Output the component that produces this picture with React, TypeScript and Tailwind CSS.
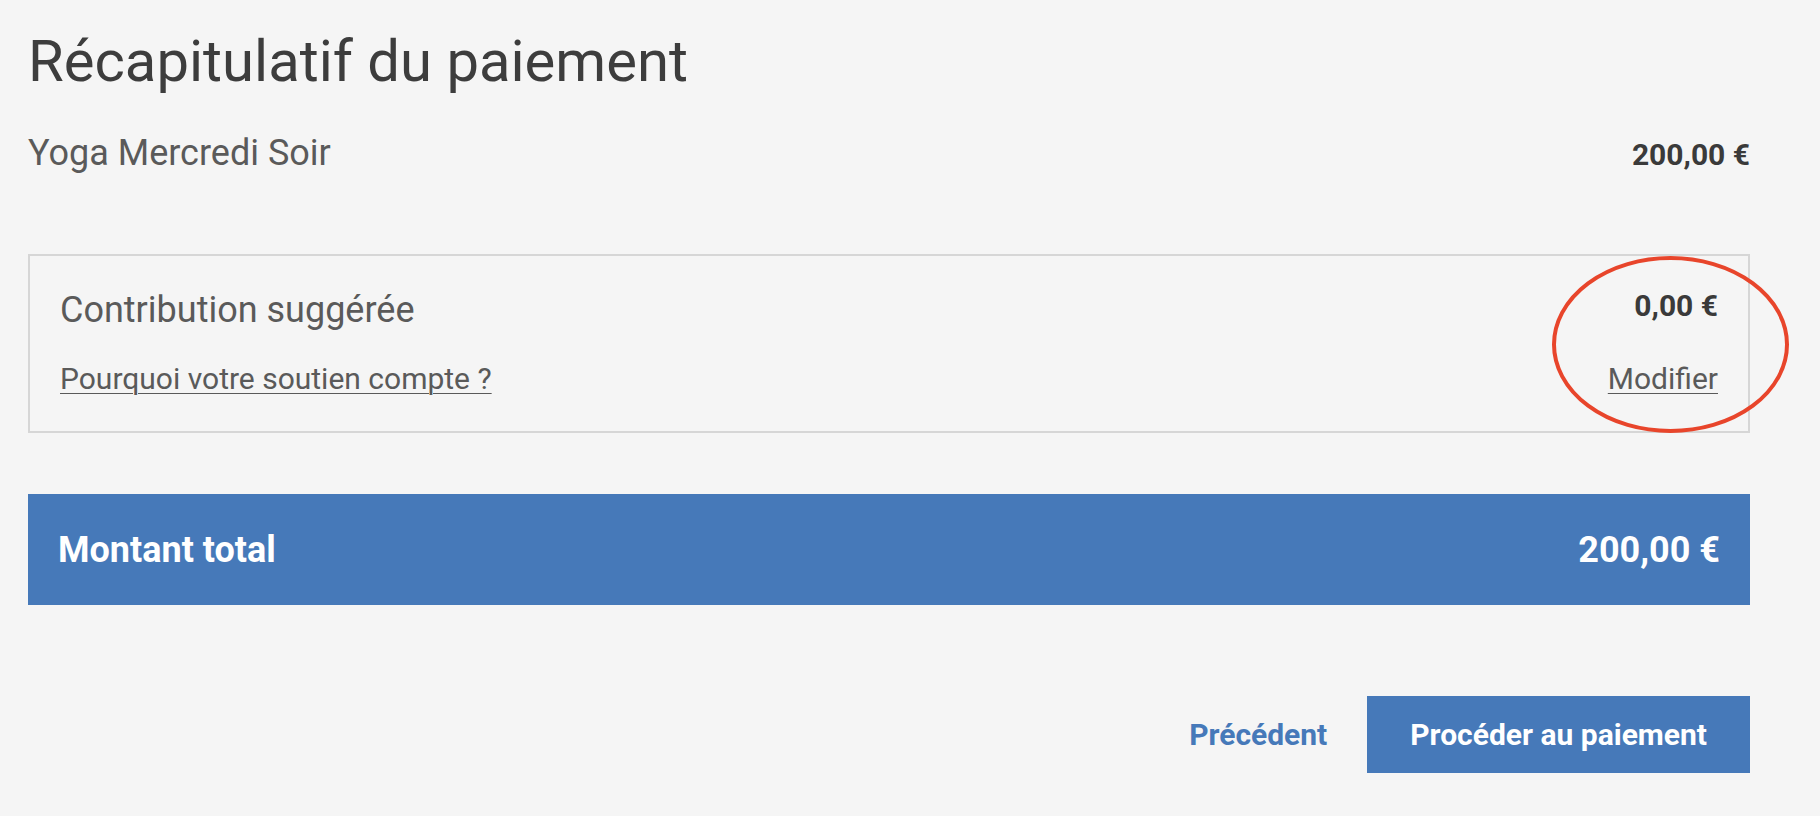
import React from "react";

export default function App() {
  return (
    <div
      className="min-h-[816px] w-full bg-[#f5f5f5] text-[#3d3d3d]"
      style={{ fontFamily: "Roboto, 'Liberation Sans', sans-serif" }}
    >
      <div className="w-[1722px] ml-[28px] pt-[31px] pb-[43px]">
        <h1 className="text-[58px] leading-[60px] font-normal text-[#3d3d3d]">
          Récapitulatif du paiement
        </h1>

        <div className="mt-[44px] flex items-baseline justify-between">
          <span className="text-[36px] leading-[36px] text-[#5a5a5a]">Yoga Mercredi Soir</span>
          <span className="text-[30px] leading-[30px] font-bold text-[#3a3a3a]">200,00 €</span>
        </div>

        <div className="relative mt-[83px] border-2 border-[#d6d6d6] px-[30px] pt-[35px] pb-[37px]">
          <div className="flex items-start justify-between">
            <span className="text-[36px] leading-[38px] text-[#5a5a5a]">Contribution suggérée</span>
            <span className="text-[30px] leading-[30px] font-bold text-[#3a3a3a]">0,00 €</span>
          </div>
          <div className="mt-[35px] flex items-start justify-between">
            <a className="text-[30px] leading-[30px] text-[#5a5a5a] underline decoration-1 underline-offset-[4px] cursor-pointer">
              Pourquoi votre soutien compte ?
            </a>
            <a className="text-[30px] leading-[30px] text-[#5a5a5a] underline decoration-1 underline-offset-[4px] cursor-pointer">
              Modifier
            </a>
          </div>
          <svg
            className="absolute left-[1522px] top-0 pointer-events-none overflow-visible"
            width="237"
            height="177"
            viewBox="0 0 237 177"
          >
            <ellipse cx="118.5" cy="88.5" rx="116.5" ry="86.5" fill="none" stroke="#e8452b" strokeWidth="4" />
          </svg>
        </div>

        <div className="mt-[61px] flex h-[111px] items-center justify-between bg-[#4679b9] px-[30px] text-white">
          <span className="text-[36px] font-bold">Montant total</span>
          <span className="text-[36px] font-bold">200,00 €</span>
        </div>

        <div className="mt-[91px] flex items-center justify-end gap-[40px]">
          <a className="text-[30px] font-bold text-[#4679b9] cursor-pointer">Précédent</a>
          <button className="flex h-[77px] items-center bg-[#4679b9] px-[43px] text-[30px] font-bold text-white">
            Procéder au paiement
          </button>
        </div>
      </div>
    </div>
  );
}
